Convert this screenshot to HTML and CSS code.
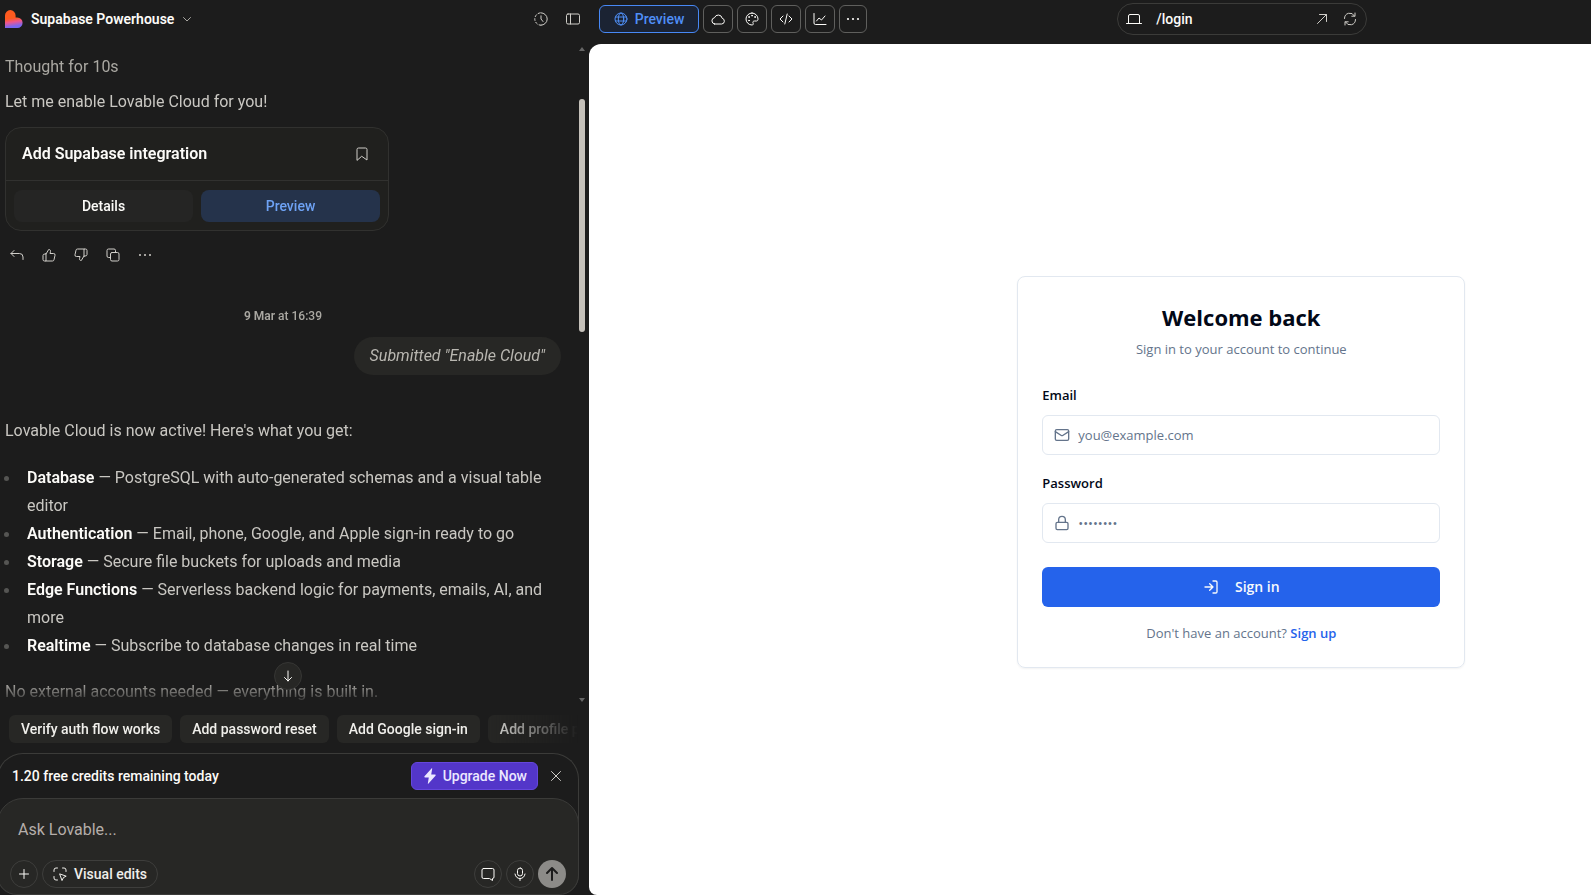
FILE: index.html
```html
<!DOCTYPE html>
<html lang="en">
<head>
<meta charset="utf-8">
<title>Supabase Powerhouse</title>
<link rel="stylesheet" href="styles.css">
</head>
<body>
<div class="app">
  <section class="side">
    <header class="side-head">
      <svg class="logo" viewBox="0 0 18 18" aria-hidden="true">
        <defs><linearGradient id="lg" x1="0.4" y1="0" x2="0.55" y2="1"><stop offset="0.45" stop-color="#ff5a1f"/><stop offset="0.65" stop-color="#f0568c"/><stop offset="0.9" stop-color="#7a66f0"/></linearGradient></defs>
        <path fill="url(#lg)" d="M0 5.400a5.300 5.300 0 0 1 10.600 0v2h1.700a5.300 5.300 0 0 1 0 10.600H0z"/>
      </svg>
      <button class="project" type="button">Supabase Powerhouse
        <svg class="icon i10" viewBox="0 0 10 10"><path d="M1.500 3.500 5 7l3.500-3.500"/></svg>
      </button>
      <div class="side-tools">
        <button class="bare" type="button" aria-label="History"><svg class="icon i16" viewBox="0 0 16 16"><path d="M8 1.800a6.200 6.200 0 0 1 0 12.400M8 4.800V8l2 2.500"/><path d="M8 14.200A6.200 6.200 0 0 1 8 1.800" stroke-dasharray="2 2"/></svg></button>
        <button class="bare" type="button" aria-label="Toggle sidebar"><svg class="icon i16" viewBox="0 0 16 16"><rect x="1.500" y="3" width="13" height="10" rx="1.500"/><path d="M5.500 3v10"/></svg></button>
      </div>
    </header>

    <div class="chat">
      <div class="log">
        <p class="thought">Thought for 10s</p>
        <p class="line">Let me enable Lovable Cloud for you!</p>
        <article class="task">
          <div class="task-head"><h2>Add Supabase integration</h2>
            <button class="bare" type="button" aria-label="Bookmark"><svg class="icon i16" viewBox="0 0 16 16"><path d="M3 14V3.500A1.500 1.500 0 0 1 4.500 2h7A1.500 1.500 0 0 1 13 3.500V14l-5-3.500z"/></svg></button>
          </div>
          <div class="task-foot"><button type="button">Details</button><button class="blue" type="button">Preview</button></div>
        </article>
        <div class="actions">
          <button class="bare" type="button" aria-label="Revert"><svg class="icon i14" viewBox="0 0 14 14"><path d="M4 2.500 1 5.500l3 3M1 5.500h8.500A3.500 3.500 0 0 1 13 9v2.500"/></svg></button>
          <button class="bare" type="button" aria-label="Like"><svg class="icon i14" viewBox="0 0 14 14"><path d="M4 6v7H2.500A1.500 1.500 0 0 1 1 11.500v-4A1.500 1.500 0 0 1 2.500 6zl2.700-4.500C8 1.500 8.800 2.300 8.500 3.500L8 5.500h3.500A1.500 1.500 0 0 1 13 7.300l-1 4.500A1.500 1.500 0 0 1 10.500 13H4"/></svg></button>
          <button class="bare" type="button" aria-label="Dislike"><svg class="icon i14" viewBox="0 0 14 14"><path d="M10 8V1h1.500A1.500 1.500 0 0 1 13 2.500v4A1.500 1.500 0 0 1 11.500 8zl-2.700 4.500C6 12.500 5.200 11.700 5.500 10.500L6 8.500H2.500A1.500 1.500 0 0 1 1 6.700l1-4.500A1.500 1.500 0 0 1 3.500 1H10"/></svg></button>
          <button class="bare" type="button" aria-label="Copy"><svg class="icon i14" viewBox="0 0 14 14"><rect x="4.500" y="4.500" width="8.500" height="8.500" rx="1.500"/><path d="M4.500 9.500h-2A1.500 1.500 0 0 1 1 8V2.500A1.500 1.500 0 0 1 2.500 1H8a1.500 1.500 0 0 1 1.500 1.500v2"/></svg></button>
          <button class="bare" type="button" aria-label="More"><svg class="dots i14" viewBox="0 0 14 14"><circle cx="2" cy="7" r="1"/><circle cx="7" cy="7" r="1"/><circle cx="12" cy="7" r="1"/></svg></button>
        </div>
        <p class="date"><b>9 Mar</b> at 16:39</p>
        <p class="bubble">Submitted "Enable Cloud"</p>
        <p class="line">Lovable Cloud is now active! Here's what you get:</p>
        <ul class="features">
          <li><b>Database</b> — PostgreSQL with auto-generated schemas and a visual table editor</li>
          <li><b>Authentication</b> — Email, phone, Google, and Apple sign-in ready to go</li>
          <li><b>Storage</b> — Secure file buckets for uploads and media</li>
          <li><b>Edge Functions</b> — Serverless backend logic for payments, emails, AI, and more</li>
          <li><b>Realtime</b> — Subscribe to database changes in real time</li>
        </ul>
        <p class="line">No external accounts needed — everything is built in.</p>
      </div>
      <div class="scroll" aria-hidden="true">
        <svg viewBox="0 0 6 6"><path d="M3 1 6 5H0z"/></svg>
        <div class="track"><div class="thumb"></div></div>
        <svg viewBox="0 0 6 6"><path d="M3 5 6 1H0z"/></svg>
      </div>
      <button class="jump" type="button" aria-label="Scroll to bottom"><svg class="icon i14" viewBox="0 0 14 14"><path d="M7 2v10M3.500 8.500 7 12l3.500-3.500"/></svg></button>
    </div>

    <div class="chips">
      <button type="button">Verify auth flow works</button>
      <button type="button">Add password reset</button>
      <button type="button">Add Google sign-in</button>
      <button type="button">Add profile page</button>
    </div>

    <div class="dock">
      <div class="credits"><span>1.20 free credits remaining today</span>
        <button class="upgrade" type="button"><svg class="i16" viewBox="0 0 16 16"><path fill="currentColor" d="M9.500.5 2.500 8.200c-.4.500-.1 1.200.5 1.200h3.800L5.800 15.500c0 .3.300.4.500.2l7.200-7.900c.4-.5.100-1.200-.5-1.200H9.200L10.200.8c0-.4-.4-.6-.7-.3z"/></svg>Upgrade Now</button>
        <button class="bare" type="button" aria-label="Dismiss"><svg class="icon i12" viewBox="0 0 12 12"><path d="m1.500 1.500 9 9m0-9-9 9"/></svg></button>
      </div>
      <form class="composer">
        <textarea rows="1" placeholder="Ask Lovable..." aria-label="Message"></textarea>
        <div class="composer-row">
          <button class="round" type="button" aria-label="Add"><svg class="icon i12" viewBox="0 0 12 12"><path d="M6 1.500v9M1.500 6h9"/></svg></button>
          <button class="round wide" type="button"><svg class="icon i14" viewBox="0 0 14 14"><path d="M1 4.500V3a2 2 0 0 1 2-2h1.500M9.500 1H11a2 2 0 0 1 2 2v1.500M1 9.500V11a2 2 0 0 0 2 2h1.500M7 7l6.200 2.200-2.700 1.300-1.300 2.700z"/></svg>Visual edits</button>
          <span class="grow"></span>
          <button class="round" type="button" aria-label="Chat"><svg class="icon i16" viewBox="0 0 16 16"><path d="M3.500 2.500h9A1.500 1.500 0 0 1 14 4v7a1.500 1.500 0 0 1-1.500 1.500v2l-3-2h-6A1.500 1.500 0 0 1 2 11V4a1.500 1.500 0 0 1 1.500-1.500z"/></svg></button>
          <button class="round" type="button" aria-label="Dictate"><svg class="icon i14" viewBox="0 0 14 14"><rect x="4.500" y="1" width="5" height="8" rx="2.500"/><path d="M2 7c.5 3 2.500 4.500 5 4.500S11.500 10 12 7M7 11.500V13.500"/></svg></button>
          <button class="round send" type="submit" aria-label="Send"><svg class="icon i16" viewBox="0 0 16 16"><path d="M8 14V2M3 7l5-5 5 5"/></svg></button>
        </div>
      </form>
    </div>
  </section>

  <section class="main">
    <header class="toolbar">
      <nav class="tabs">
        <button class="active" type="button"><svg class="icon i14" viewBox="0 0 14 14"><circle cx="7" cy="7" r="6"/><ellipse cx="7" cy="7" rx="2.700" ry="6"/><path d="M1.500 5h11M1.500 9h11"/></svg>Preview</button>
        <button type="button" aria-label="Cloud"><svg class="icon i14" viewBox="0 0 14 14"><path d="M3.600 12h7a2.900 2.900 0 0 0 .6-5.700A4 4 0 0 0 3.500 5.700 3.200 3.200 0 0 0 3.600 12z"/></svg></button>
        <button type="button" aria-label="Design"><svg class="icon i14" viewBox="0 0 14 14"><path d="M7 1a6 6 0 1 0 0 12c1.300 0 1.500-1 1.100-1.800C7.500 9.800 8.200 9 9.500 9h2c1 0 1.500-.8 1.500-2A6 6 0 0 0 7 1z"/><g fill="currentColor"><circle cx="4" cy="5" r=".4"/><circle cx="7" cy="3.700" r=".4"/><circle cx="10" cy="5" r=".4"/><circle cx="4" cy="8.500" r=".4"/></g></svg></button>
        <button type="button" aria-label="Code"><svg class="icon i14" viewBox="0 0 14 14"><path d="M4 4 1 7l3 3M10 4l3 3-3 3M8.200 2 5.800 12"/></svg></button>
        <button type="button" aria-label="Analytics"><svg class="icon i14" viewBox="0 0 14 14"><path d="M1 1.500V11a1.500 1.500 0 0 0 1.500 1.500H13M3.500 9 6 6l2.500 2L12 4"/></svg></button>
        <button class="more" type="button" aria-label="More"><svg class="dots i14" viewBox="0 0 14 14"><circle cx="2" cy="7" r="1.100"/><circle cx="7" cy="7" r="1.100"/><circle cx="12" cy="7" r="1.100"/></svg></button>
      </nav>
      <div class="address">
        <svg class="icon i16" viewBox="0 0 16 16"><path d="M2.500 12.500V5A1.500 1.500 0 0 1 4 3.500h8A1.500 1.500 0 0 1 13.500 5v7.500M.5 12.500h15"/></svg>
        <span class="path">/login</span>
        <button class="bare" type="button" aria-label="Open in new tab"><svg class="icon i12" viewBox="0 0 12 12"><path d="M1.500 10.500l9-9M3.500 1.500h7v7"/></svg></button>
        <button class="bare" type="button" aria-label="Reload"><svg class="icon i14" viewBox="0 0 14 14"><path d="M1.500 6.500A5.300 5.300 0 0 1 11.500 4M12 1v3.200H8.800M12.500 7.500A5.300 5.300 0 0 1 2.500 10M2 13V9.800h3.200"/></svg></button>
      </div>
    </header>
    <div class="stage">
      <form class="login">
        <h1>Welcome back</h1>
        <p class="sub">Sign in to your account to continue</p>
        <label for="email">Email</label>
        <div class="field"><svg class="icon i16" viewBox="0 0 24 24"><rect x="2" y="4" width="20" height="16" rx="2"/><path d="m22 7-8.970 5.700a1.940 1.940 0 0 1-2.060 0L2 7"/></svg><input id="email" type="email" placeholder="you@example.com"></div>
        <label for="password">Password</label>
        <div class="field"><svg class="icon i16" viewBox="0 0 24 24"><rect x="3" y="11" width="18" height="11" rx="2"/><path d="M7 11V7a5 5 0 0 1 10 0v4"/></svg><input id="password" type="password" placeholder="••••••••"></div>
        <button class="submit" type="submit"><svg class="icon i16" viewBox="0 0 24 24"><path d="M15 3h4a2 2 0 0 1 2 2v14a2 2 0 0 1-2 2h-4M10 17l5-5-5-5M15 12H3"/></svg>Sign in</button>
        <p class="signup">Don't have an account? <a href="#">Sign up</a></p>
      </form>
    </div>
  </section>
</div>
</body>
</html>
```
FILE: styles.css
```css
* { box-sizing: border-box; margin: 0; padding: 0; }
body { background: #1c1c1c; color: #fcfbf8; font: 500 14px/20px Roboto, "Liberation Sans", sans-serif; overflow: hidden; }
button, input, textarea { font: inherit; color: inherit; background: none; border: 0; }
button { display: flex; align-items: center; justify-content: center; cursor: pointer; white-space: nowrap; }
svg { display: block; flex: none; }
.icon { fill: none; stroke: currentColor; stroke-width: 1; stroke-linecap: round; stroke-linejoin: round; }
.dots { fill: currentColor; }
.i10 { width: 10px; height: 10px; }
.i12 { width: 12px; height: 12px; }
.i14 { width: 14px; height: 14px; }
.i16 { width: 16px; height: 16px; }
.bare { color: #d0cec9; }

.app { display: grid; grid-template-columns: 589px 82vw; height: 100vh; overflow: hidden; }

.side { display: flex; flex-direction: column; min-width: 0; min-height: 0; }
.side-head { display: flex; align-items: center; height: 38px; padding: 0 8px 0 5px; }
.logo { width: 18px; height: 18px; }
.project { margin-left: 8px; gap: 8px; font-weight: 600; }
.project .icon { color: #a8a6a1; }
.side-tools { display: flex; gap: 16px; margin-left: auto; }

.chat { position: relative; flex: 1; min-height: 0; display: flex; padding-top: 8px; }
.log { flex: 1; min-width: 0; overflow: hidden; padding: 7px 18px 0 5px; font-size: 16px; line-height: 28px; font-weight: 400; color: #c9c7c2; mask-image: linear-gradient(#000 calc(100% - 26px), transparent); }
.thought { color: #aaa8a2; }
.thought + .line { margin-top: 7px; }
.task { width: 384px; margin-top: 11px; border: 1px solid #31312f; border-radius: 16px; background: #20201e; color: #fcfbf8; }
.task-head { display: flex; align-items: center; justify-content: space-between; height: 53px; padding: 0 18px 0 16px; border-bottom: 1px solid #31312f; }
.task-head h2 { font-size: 16px; font-weight: 600; }
.task-foot { display: flex; gap: 8px; padding: 9px 8px 8px; }
.task-foot button { flex: 1; height: 32px; border-radius: 8px; background: #252524; font-size: 14px; font-weight: 500; }
.task-foot .blue { background: #25334b; color: #6ea2f4; }
.actions { display: flex; gap: 18px; padding: 0 5px; margin-top: 17px; }
.date { margin-top: 40px; text-align: center; font-size: 12px; font-weight: 500; color: #aaa8a2; }
.date b { font-weight: 600; }
.bubble { width: fit-content; margin: 7px 0 42px auto; padding: 5px 16px; border-radius: 19px; background: #272725; font-style: italic; color: #b9b7b1; }
.features { list-style: none; margin: 19px 0 18px; padding-left: 22px; }
.features li { position: relative; }
.features li::before { content: ""; position: absolute; left: -23px; top: 12px; width: 5px; height: 5px; border-radius: 50%; background: #555553; }
.features b { font-weight: 600; color: #fcfbf8; }
.scroll { width: 6px; margin-right: 4px; display: flex; flex-direction: column; padding-bottom: 2px; }
.scroll svg { width: 6px; height: 6px; fill: #666; }
.track { flex: 1; padding-top: 47px; }
.thumb { height: 39%; border-radius: 3px; background: #c5c1ba; }
.jump { position: absolute; left: calc(50% - 21px); bottom: 15px; width: 28px; height: 28px; border: 1px solid #363634; border-radius: 50%; background: #272725; }

.chips { display: flex; gap: 8px; padding: 10px 0 10px 9px; margin-right: 11px; overflow: hidden; mask-image: linear-gradient(90deg, #000 83%, transparent 100%); }
.chips button { flex: none; height: 28px; padding: 0 12px; border-radius: 6px; background: #272725; color: #f0efeb; }

.dock { margin: 0 10px 0 -3px; border: 1px solid #3b3b39; border-bottom: 0; border-radius: 26px 26px 20px 20px; }
.credits { display: flex; align-items: center; height: 44px; padding: 0 16px 0 14px; }
.upgrade { margin-left: auto; margin-right: 12px; height: 28px; padding: 0 10px; gap: 5px; border: 1px solid #6547dc; border-radius: 6px; background: #5336c9; color: #ece8ff; }
.composer { margin: 0 -1px; border: 1px solid #3b3b39; border-radius: 26px 26px 20px 20px; background: #272725; padding: 19px 12px 6px; }
.composer textarea { display: block; width: 100%; height: 24px; margin-bottom: 18px; padding: 0 8px; resize: none; outline: 0; font-size: 16px; line-height: 24px; font-weight: 400; overflow: hidden; }
.composer textarea::placeholder { color: #b5aeaa; }
.composer-row { display: flex; gap: 4px; }
.grow { flex: 1; }
.round { width: 28px; height: 28px; border: 1px solid #3e3e3c; border-radius: 14px; }
.wide { width: auto; padding: 0 10px; gap: 7px; color: #efeeea; }
.send { border: 0; background: #8c8b88; color: #1c1c1c; }
.send .icon { stroke-width: 2; }

.main { display: flex; flex-direction: column; min-width: 0; }
.toolbar { display: grid; grid-template-columns: 1fr 250px 1fr; align-items: center; height: 38px; margin-bottom: 6px; padding-left: 10px; padding-right: 8px; }
.tabs { display: flex; gap: 4px; }
.tabs button { width: 30px; height: 28px; border: 1px solid #5f5f5d; border-radius: 6px; }
.tabs .more { width: 28px; }
.tabs .active { width: 100px; gap: 7px; border-color: #4788f5; background: #1b2333; color: #4f8ff7; }
.address { display: flex; align-items: center; height: 32px; padding: 0 9px 0 8px; border: 1px solid #3b3b39; border-radius: 16px; }
.path { flex: 1; padding-left: 14px; }
.address .bare + .bare { margin-left: 15px; }

.stage { flex: 1; display: flex; align-items: center; justify-content: center; padding-top: 4px; background: #fff; border-radius: 12px 0 0 8px; color: #020817; font: 400 13px/20px "Open Sans", "Noto Sans", sans-serif; }
.stage .icon { stroke-width: 2; }
.login { width: 448px; padding: 24px; border: 1px solid #e2e8f0; border-radius: 8px; box-shadow: 0 1px 2px rgba(0, 0, 0, .05); }
.login h1 { text-align: center; font-size: 22px; line-height: 32px; font-weight: 700; }
.sub { margin: 6px 0 24px; text-align: center; color: #64748b; }
.login label { display: block; line-height: 24px; font-weight: 600; }
.field { display: flex; align-items: center; height: 40px; margin: 8px 0 16px; padding: 0 11px; gap: 8px; border: 1px solid #e2e8f0; border-radius: 6px; color: #64748b; }
.field input { flex: 1; min-width: 0; outline: 0; }
.field input::placeholder { color: #64748b; }
.submit { width: 100%; height: 40px; margin: 24px 0 16px; gap: 16px; border-radius: 6px; background: #2563eb; color: #f8fafc; font-size: 14px; font-weight: 600; }
.signup { text-align: center; color: #64748b; }
.signup a { color: #2563eb; font-weight: 600; text-decoration: none; }
```
